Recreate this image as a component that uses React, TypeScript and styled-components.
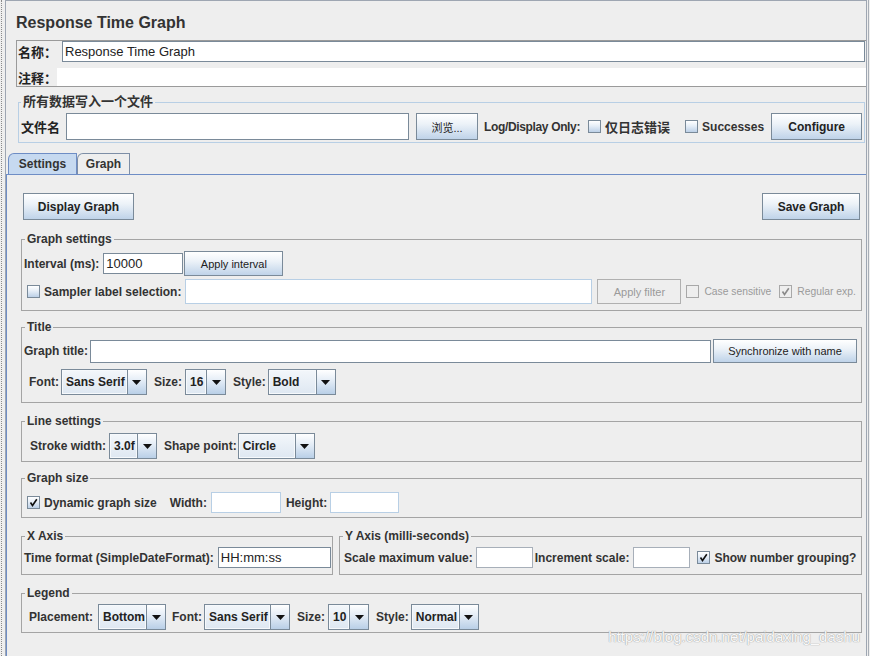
import React from 'react';
import styled, { createGlobalStyle, css } from 'styled-components';

const GlobalStyle = createGlobalStyle`
  html, body { margin: 0; padding: 0; background: #eeeeee; }
  body {
    font-family: "Liberation Sans", Arial, "Noto Sans CJK SC", sans-serif;
    color: #333333;
  }
  * { box-sizing: border-box; }
`;

type Ml = { $ml?: number };
const spaced = css<Ml>`
  margin-left: ${p => p.$ml ?? 0}px;
`;

const Screen = styled.div`
  position: relative;
  display: flex;
  width: 870px;
  height: 656px;
  overflow: hidden;
  background: #eeeeee;
`;

const DottedRail = styled.div`
  flex: none;
  width: 1px;
  margin-left: 1px;
  border-left: 1px dotted #8a8a8a;
`;

const Frame = styled.div`
  display: flex;
  flex-direction: column;
  flex: none;
  width: 862px;
  margin-left: 3px;
  border: 1px solid #9ea6b2;
  border-bottom: none;

  & > * { flex-shrink: 0; }
`;

const OuterEdge = styled.div`
  flex: none;
  width: 1px;
  margin-left: 1px;
  border-left: 1px solid #a8aeb6;
`;

const Heading = styled.h1`
  margin: 12px 0 0 10px;
  font-size: 16px;
  line-height: 20px;
  font-weight: bold;
  color: #333;
`;

/* name / comment box */
const NamePanel = styled.div`
  display: flex;
  flex-direction: column;
  margin: 7px 0 0 10px;
  padding-left: 1px;
  border: 1px solid #9a9a9a;
  border-right: none;
`;

const NameRow = styled.div<{ $h: number; $mt?: number; $pr?: number }>`
  display: flex;
  align-items: center;
  height: ${p => p.$h}px;
  margin-top: ${p => p.$mt ?? 0}px;
  padding-right: ${p => p.$pr ?? 0}px;
`;

const CnLabel = styled.span<Ml & { $w?: number }>`
  ${spaced};
  flex: none;
  width: ${p => (p.$w ? `${p.$w}px` : 'auto')};
  font-size: 13px;
  font-weight: bold;
  color: #222;
  white-space: nowrap;
`;

const CommentArea = styled.div`
  flex: 1;
  align-self: stretch;
  background: #ffffff;
`;

/* titled border groups */
const Group = styled.fieldset<{ $tone?: 'blue'; $mt?: number; $pb?: number }>`
  margin: ${p => p.$mt ?? 0}px 0 0;
  padding: 0 2px ${p => p.$pb ?? 2}px;
  min-width: 0;
  flex-shrink: 0;
  border: 1px solid ${p => (p.$tone === 'blue' ? '#b8cfe5' : '#a4a4a4')};
`;

const FileGroup = styled(Group)`
  margin: 8px 1px 0 12px;
`;

const GroupTitle = styled.legend<{ $cn?: boolean }>`
  margin-left: ${p => (p.$cn ? 0 : 1)}px;
  padding: 0 2px;
  font-size: ${p => (p.$cn ? 13 : 12)}px;
  line-height: 14px;
  font-weight: bold;
  color: #333;
`;

const GroupBody = styled.div<{ $pt: number; $gap?: number }>`
  display: flex;
  flex-direction: column;
  gap: ${p => p.$gap ?? 0}px;
  padding-top: ${p => p.$pt}px;
`;

const Row = styled.div<{ $h: number; $pl?: number }>`
  display: flex;
  align-items: center;
  height: ${p => p.$h}px;
  padding-left: ${p => p.$pl ?? 0}px;
`;

const Label = styled.span<Ml & { $narrow?: boolean }>`
  ${spaced};
  flex: none;
  font-size: 12px;
  font-weight: bold;
  letter-spacing: ${p => (p.$narrow ? '-0.35px' : 'normal')};
  color: #333;
  white-space: nowrap;
`;

const TextField = styled.div<Ml & { $w?: number; $h: number; $tone?: 'soft' | 'mid' }>`
  ${spaced};
  display: flex;
  align-items: center;
  flex: ${p => (p.$w ? 'none' : '1')};
  width: ${p => (p.$w ? `${p.$w}px` : 'auto')};
  height: ${p => p.$h}px;
  padding-left: 2px;
  background: #ffffff;
  border: 1px solid
    ${p => (p.$tone === 'soft' ? '#b8cfe5' : p.$tone === 'mid' ? '#a7afb9' : '#7a8a99')};
  font-size: 13px;
  color: #222;
  white-space: nowrap;
  overflow: hidden;
`;

const Button = styled.button<Ml & { $w: number; $h: number; $bold?: boolean }>`
  ${spaced};
  flex: none;
  width: ${p => p.$w}px;
  height: ${p => p.$h}px;
  padding: 0;
  border: 1px solid #7a8a99;
  background: linear-gradient(to bottom, #ffffff 0%, #ecf2f8 40%, #bfd3e9 100%);
  font-family: inherit;
  font-size: ${p => (p.$bold ? 12 : 11)}px;
  font-weight: ${p => (p.$bold ? 'bold' : 'normal')};
  color: #222;
  white-space: nowrap;

  &:disabled {
    border-color: #b0b0b0;
    background: #eeeeee;
    color: #9a9a9a;
  }
`;

/* check boxes */
const CheckLabel = styled.span<Ml & { $off?: boolean; $cn?: boolean }>`
  ${spaced};
  display: flex;
  align-items: center;
  gap: ${p => (p.$off ? 5 : 4)}px;
  flex: none;
  font-size: ${p => (p.$off ? 10.3 : p.$cn ? 13 : 12)}px;
  font-weight: ${p => (p.$off ? 'normal' : 'bold')};
  color: ${p => (p.$off ? '#9a9a9a' : '#333')};
  white-space: nowrap;
`;

const Box = styled.span<{ $off?: boolean }>`
  display: flex;
  align-items: center;
  justify-content: center;
  flex: none;
  width: 13px;
  height: 13px;
  border: 1px solid ${p => (p.$off ? '#a8a8a8' : '#7a8a99')};
  background: ${p =>
    p.$off ? '#eeeeee' : 'linear-gradient(to bottom, #ffffff 0%, #e6eef7 45%, #bcd0e7 100%)'};
`;

const Check = ({ checked, off }: { checked?: boolean; off?: boolean }) => (
  <Box $off={off}>
    {checked && (
      <svg width="9" height="9" viewBox="0 0 9 9">
        <path d="M1.5 4.5 L3.5 7.5 L7.8 1.2" fill="none" stroke={off ? '#8a8a8a' : '#111'} strokeWidth="1.6" />
      </svg>
    )}
  </Box>
);

/* combo boxes */
const ComboBox = styled.div<Ml & { $w: number }>`
  ${spaced};
  display: flex;
  flex: none;
  width: ${p => p.$w}px;
  height: 26px;
  border: 1px solid #7a8a99;
`;

const ComboValue = styled.div`
  flex: 1;
  display: flex;
  align-items: center;
  padding-left: 3px;
  border: 1px solid #f6f9fc;
  background: linear-gradient(to bottom, #f2f6fa, #dfe8f2);
  font-size: 12px;
  font-weight: bold;
  color: #222;
  white-space: nowrap;
  overflow: hidden;
`;

const ComboArrow = styled.div`
  flex: none;
  display: flex;
  align-items: center;
  justify-content: center;
  width: 19px;
  border-left: 1px solid #7a8a99;
  background: linear-gradient(to bottom, #ffffff 0%, #e3ecf6 45%, #b9cfe7 100%);
`;

const Combo = ({ value, w, ml }: { value: string; w: number; ml?: number }) => (
  <ComboBox $w={w} $ml={ml}>
    <ComboValue>{value}</ComboValue>
    <ComboArrow>
      <svg width="9" height="5" viewBox="0 0 9 5">
        <path d="M0 0 H9 L4.5 5 Z" fill="#111" />
      </svg>
    </ComboArrow>
  </ComboBox>
);

/* tabs */
const TabStrip = styled.div`
  display: flex;
  height: 21px;
  margin: 10px 0 0 2px;
`;

const Tab = styled.div<{ $active?: boolean; $w: number }>`
  display: flex;
  align-items: center;
  justify-content: center;
  width: ${p => p.$w}px;
  border: 1px solid ${p => (p.$active ? '#6e8dc5' : '#7d8ea6')};
  border-bottom: none;
  border-top-left-radius: 6px;
  background: ${p => (p.$active ? '#c6d9f0' : '#eeeeee')};
  font-size: 12px;
  font-weight: bold;
  color: #333;
`;

const TabPanel = styled.div`
  flex: 1;
  display: flex;
  flex-direction: column;
  padding: 18px 4px 0 14px;
  border-top: 1px solid #6e8dc5;
  border-left: 1px solid #6e8dc5;

  & > * { flex-shrink: 0; }
`;

const ButtonBar = styled.div`
  display: flex;
  justify-content: space-between;
  padding: 0 2px;
`;

const AxisPair = styled.div`
  display: flex;
  gap: 6px;
  margin-top: 11px;
`;

const Watermark = styled.div`
  position: absolute;
  right: 10px;
  top: 628px;
  font-size: 15px;
  color: rgba(255, 255, 255, 0.95);
  text-shadow: 0 0 1px #9a9a9a, 0 0 1px #a8a8a8;
  white-space: nowrap;
`;

export default function App() {
  return (
    <Screen>
      <GlobalStyle />
      <DottedRail />
      <Frame>
        <Heading>Response Time Graph</Heading>

        <NamePanel>
          <NameRow $h={21} $pr={1}>
            <CnLabel $w={44}>名称：</CnLabel>
            <TextField $h={21}>Response Time Graph</TextField>
          </NameRow>
          <NameRow $h={18} $mt={6}>
            <CnLabel $w={39}>注释：</CnLabel>
            <CommentArea />
          </NameRow>
        </NamePanel>

        <FileGroup $tone="blue" $pb={2}>
          <GroupTitle $cn>所有数据写入一个文件</GroupTitle>
          <GroupBody $pt={4}>
            <Row $h={27}>
              <CnLabel>文件名</CnLabel>
              <TextField $ml={6} $w={343} $h={27} />
              <Button $ml={7} $w={62} $h={27}>浏览...</Button>
              <Label $ml={6} $narrow>Log/Display Only:</Label>
              <CheckLabel $ml={8} $cn>
                <Check />
                仅日志错误
              </CheckLabel>
              <CheckLabel $ml={15}>
                <Check />
                Successes
              </CheckLabel>
              <Button $ml={7} $w={91} $h={27} $bold>Configure</Button>
            </Row>
          </GroupBody>
        </FileGroup>

        <TabStrip>
          <Tab $active $w={69}>Settings</Tab>
          <Tab $w={53}>Graph</Tab>
        </TabStrip>

        <TabPanel>
          <ButtonBar>
            <Button $w={111} $h={27} $bold>Display Graph</Button>
            <Button $w={98} $h={27} $bold>Save Graph</Button>
          </ButtonBar>

          <Group $mt={12} $pb={6}>
            <GroupTitle>Graph settings</GroupTitle>
            <GroupBody $pt={5} $gap={3}>
              <Row $h={25}>
                <Label>Interval (ms):</Label>
                <TextField $ml={4} $w={80} $h={21}>10000</TextField>
                <Button $ml={1} $w={99} $h={25}>Apply interval</Button>
              </Row>
              <Row $h={25} $pl={3}>
                <CheckLabel>
                  <Check />
                  Sampler label selection:
                </CheckLabel>
                <TextField $ml={4} $w={407} $h={25} $tone="soft" />
                <Button $ml={5} $w={84} $h={25} disabled>Apply filter</Button>
                <CheckLabel $ml={5} $off>
                  <Check off />
                  Case sensitive
                </CheckLabel>
                <CheckLabel $ml={8} $off>
                  <Check checked off />
                  Regular exp.
                </CheckLabel>
              </Row>
            </GroupBody>
          </Group>

          <Group $mt={9} $pb={7}>
            <GroupTitle>Title</GroupTitle>
            <GroupBody $pt={5} $gap={6}>
              <Row $h={24}>
                <Label>Graph title:</Label>
                <TextField $ml={2} $w={621} $h={23} />
                <Button $ml={2} $w={144} $h={24}>Synchronize with name</Button>
              </Row>
              <Row $h={26} $pl={5}>
                <Label>Font:</Label>
                <Combo ml={2} w={86} value="Sans Serif" />
                <Label $ml={7}>Size:</Label>
                <Combo ml={3} w={41} value="16" />
                <Label $ml={7}>Style:</Label>
                <Combo ml={2} w={68} value="Bold" />
              </Row>
            </GroupBody>
          </Group>

          <Group $mt={11} $pb={2}>
            <GroupTitle>Line settings</GroupTitle>
            <GroupBody $pt={5}>
              <Row $h={26} $pl={6}>
                <Label>Stroke width:</Label>
                <Combo ml={3} w={48} value="3.0f" />
                <Label $ml={7}>Shape point:</Label>
                <Combo ml={1} w={77} value="Circle" />
              </Row>
            </GroupBody>
          </Group>

          <Group $mt={9} $pb={2}>
            <GroupTitle>Graph size</GroupTitle>
            <GroupBody $pt={5}>
              <Row $h={25} $pl={3}>
                <CheckLabel>
                  <Check checked />
                  Dynamic graph size
                </CheckLabel>
                <Label $ml={13}>Width:</Label>
                <TextField $ml={4} $w={70} $h={21} $tone="soft" />
                <Label $ml={5}>Height:</Label>
                <TextField $ml={3} $w={69} $h={21} $tone="soft" />
              </Row>
            </GroupBody>
          </Group>

          <AxisPair>
            <Group $pb={5} style={{ width: 312 }}>
              <GroupTitle>X Axis</GroupTitle>
              <GroupBody $pt={3}>
                <Row $h={23}>
                  <Label>Time format (SimpleDateFormat):</Label>
                  <TextField $ml={4} $w={113} $h={21}>HH:mm:ss</TextField>
                </Row>
              </GroupBody>
            </Group>
            <Group $pb={5} style={{ flex: 1 }}>
              <GroupTitle>Y Axis (milli-seconds)</GroupTitle>
              <GroupBody $pt={3}>
                <Row $h={23} $pl={2}>
                  <Label>Scale maximum value:</Label>
                  <TextField $ml={3} $w={57} $h={21} $tone="mid" />
                  <Label $ml={2}>Increment scale:</Label>
                  <TextField $ml={4} $w={57} $h={21} $tone="mid" />
                  <CheckLabel $ml={7}>
                    <Check checked />
                    Show number grouping?
                  </CheckLabel>
                </Row>
              </GroupBody>
            </Group>
          </AxisPair>

          <Group $mt={11} $pb={2}>
            <GroupTitle>Legend</GroupTitle>
            <GroupBody $pt={4}>
              <Row $h={26} $pl={5}>
                <Label>Placement:</Label>
                <Combo ml={5} w={68} value="Bottom" />
                <Label $ml={6}>Font:</Label>
                <Combo ml={2} w={86} value="Sans Serif" />
                <Label $ml={7}>Size:</Label>
                <Combo ml={3} w={41} value="10" />
                <Label $ml={7}>Style:</Label>
                <Combo ml={2} w={68} value="Normal" />
              </Row>
            </GroupBody>
          </Group>
        </TabPanel>
      </Frame>
      <OuterEdge />
      <Watermark>https://blog.csdn.net/paidaxing_dashu</Watermark>
    </Screen>
  );
}
